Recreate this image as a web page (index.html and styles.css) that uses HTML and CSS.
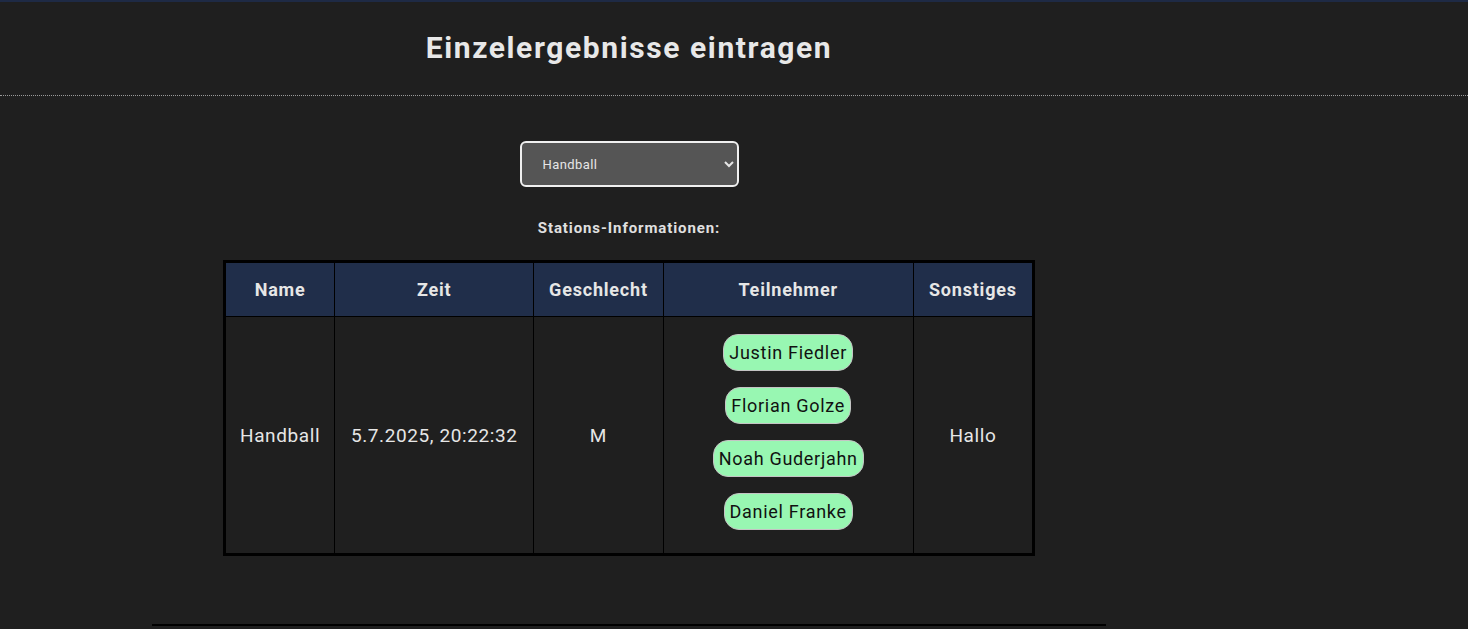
FILE: index.html
```html
<!DOCTYPE html>
<html lang="de">
<head>
<meta charset="utf-8">
<title>Einzelergebnisse eintragen</title>
<link rel="stylesheet" href="styles.css">
</head>
<body>
<div class="topbar"></div>
<header class="header">
  <div class="wrap">
    <h1 class="title">Einzelergebnisse eintragen</h1>
  </div>
</header>
<main class="wrap main">
  <select class="station-select">
    <option>Handball</option>
  </select>
  <p class="label">Stations-Informationen:</p>
  <table class="info-table">
    <colgroup>
      <col class="c-name"><col class="c-zeit"><col class="c-geschl"><col class="c-teil"><col class="c-sonst">
    </colgroup>
    <thead>
      <tr><th>Name</th><th>Zeit</th><th>Geschlecht</th><th>Teilnehmer</th><th>Sonstiges</th></tr>
    </thead>
    <tbody>
      <tr>
        <td>Handball</td>
        <td>5.7.2025, 20:22:32</td>
        <td>M</td>
        <td class="people">
          <div class="pills">
            <span class="pill">Justin Fiedler</span>
            <span class="pill">Florian Golze</span>
            <span class="pill">Noah Guderjahn</span>
            <span class="pill">Daniel Franke</span>
          </div>
        </td>
        <td>Hallo</td>
      </tr>
    </tbody>
  </table>
  <div class="divider"></div>
</main>
</body>
</html>
```

FILE: styles.css
```css
* { box-sizing: border-box; }
html, body { margin: 0; padding: 0; }
body {
  background: #1f1f1f;
  color: #e6e6e6;
  font-family: Roboto, "Liberation Sans", sans-serif;
  height: 629px;
  overflow: hidden;
}
.topbar {
  height: 2px;
  background: #1e2a45;
}
.wrap {
  width: 1258px;
  display: flex;
  flex-direction: column;
  align-items: center;
}
.header {
  height: 94px;
  border-bottom: 1px dotted #9a9a9a;
}
.title {
  margin: 0;
  padding-top: 28px;
  font-size: 30px;
  line-height: 36px;
  font-weight: 700;
  color: #e8e8e8;
  letter-spacing: 1.6px;
}
.main {
  padding-top: 45px;
}
.station-select {
  width: 219px;
  height: 46px;
  background: #555555;
  color: #e6e6e6;
  border: 2px solid #f0f0f0;
  border-radius: 6px;
  padding: 0 12px 0 17px;
  font-family: Roboto, "Liberation Sans", sans-serif;
  font-size: 13px;
  letter-spacing: 0.4px;
}
.label {
  margin: 31px 0 0;
  font-size: 15px;
  line-height: 20px;
  font-weight: 700;
  color: #e0e0e0;
  letter-spacing: 0.9px;
}
.info-table {
  margin-top: 22px;
  width: 812px;
  table-layout: fixed;
  border-collapse: collapse;
  border: 3px solid #000;
}
.c-name { width: 110px; }
.c-zeit { width: 199px; }
.c-geschl { width: 129px; }
.c-teil { width: 250px; }
.c-sonst { width: 120px; }
.info-table th, .info-table td {
  border: 1px solid #000;
  text-align: center;
  vertical-align: middle;
}
.info-table th {
  background: #202e4a;
  height: 55px;
  font-size: 18px;
  font-weight: 700;
  color: #e6e6e6;
  letter-spacing: 0.8px;
}
.info-table td {
  font-size: 19px;
  color: #e6e6e6;
  height: 238px;
  letter-spacing: 0.6px;
}
.info-table td.people {
  padding: 0 0 6px;
}
.pills {
  display: flex;
  flex-direction: column;
  align-items: center;
  gap: 16px;
}
.pill {
  display: block;
  height: 37px;
  line-height: 35px;
  padding: 0 5px;
  background: #98f7b2;
  color: #111;
  border: 1px solid #c4c4c4;
  border-radius: 15px;
  font-size: 18px;
  letter-spacing: 0.7px;
}
.divider {
  margin-top: 68px;
  width: 954px;
  height: 2px;
  background: #000;
}
```
